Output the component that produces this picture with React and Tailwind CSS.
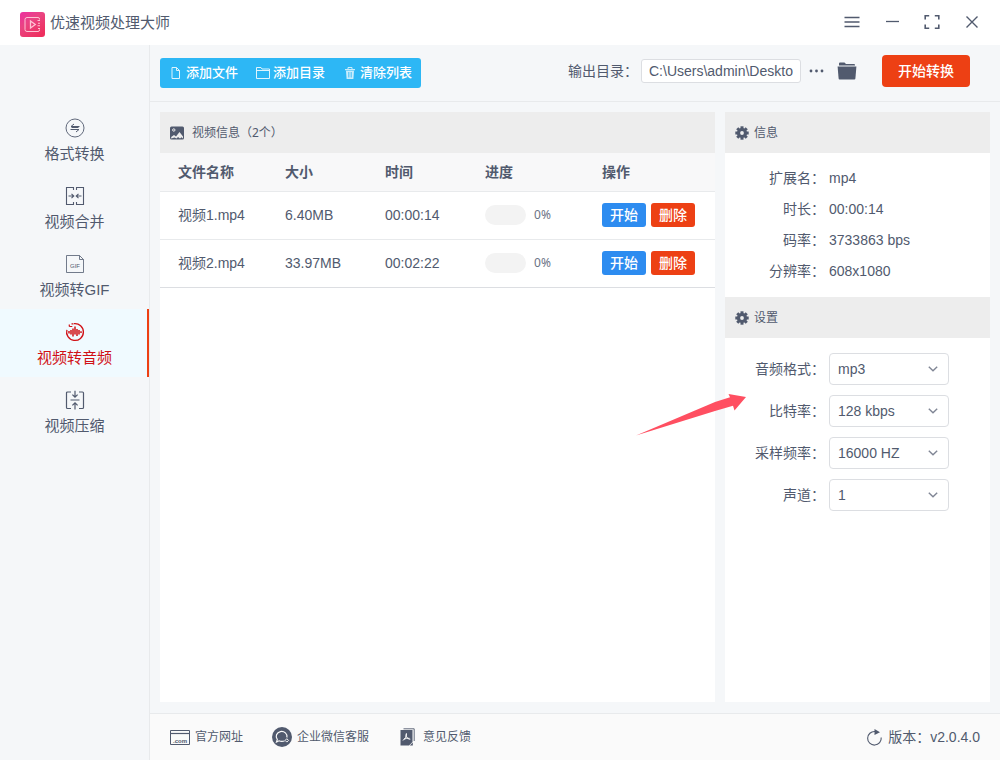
import React from "react";
import { useState } from "react";

const FormatIcon = () => (
  <svg className="w-5 h-5" viewBox="0 0 20 20" fill="none" stroke="currentColor" strokeWidth="0.9">
    <circle cx="10" cy="10" r="9" />
    <path d="M14.5 8.5H6l3-2.500M5.500 11.500h8.500l-3 2.500M6.500 9.500h7" strokeWidth="1" />
  </svg>
);

const MergeIcon = () => (
  <svg className="w-5 h-5" viewBox="0 0 20 20" fill="none" stroke="currentColor" strokeWidth="1.1">
    <path d="M8.500 4V1.500h-7v17h7V16M11.500 4V1.500h7v17h-7V16" />
    <path d="M3.500 10h5M6.500 7.800L8.800 10l-2.300 2.200M16.500 10h-5M13.500 7.800L11.200 10l2.300 2.200" />
  </svg>
);

const GifIcon = () => (
  <svg className="w-5 h-5" viewBox="0 0 20 20" fill="none" stroke="currentColor" strokeWidth="0.8">
    <path d="M14.500 1.500h-13v17h17v-13zM14.500 1.500v4h4" />
    <text x="10" y="14" textAnchor="middle" fontSize="6" fontFamily="Liberation Sans, sans-serif" fill="currentColor" stroke="none">
      GIF
    </text>
  </svg>
);

const AudioIcon = () => (
  <svg className="w-5 h-5" viewBox="0 0 20 20" fill="none" stroke="currentColor">
    <path d="M9 1.700A8.400 8.400 0 1 1 1.900 7.800" strokeWidth="1.300" />
    <path d="M4.300 4.500V2.500M4.300 4.500h3M6.500 1.800h2" strokeWidth="1.200" />
    <path d="M4 9v2.500M6 8v4.500M8 6.500v8M10 4.500v8M12 7v7M14 8v4.500M16 9.300v1.700" strokeWidth="1.500" />
  </svg>
);

const CompressIcon = () => (
  <svg className="w-5 h-5" viewBox="0 0 20 20" fill="none" stroke="currentColor" strokeWidth="1.2">
    <path d="M6 2H2.500q-1 0-1 1v14.500q0 1 1 1H6M14 2h3.500q1 0 1 1v14.500q0 1-1 1H14" />
    <path d="M5.500 10h9M10 .8V7M7.400 4.600L10 7.200l2.600-2.600M10 19.500V13M7.400 15.400L10 12.800l2.600 2.600" />
  </svg>
);

const Gear = () => (
  <svg className="w-[14px] h-[14px]" viewBox="0 0 14 14">
    <g fill="currentColor">
      <rect x="5.500" y="0.300" width="3" height="13.400" />
      <rect x="5.500" y="0.300" width="3" height="13.400" transform="rotate(45 7 7)" />
      <rect x="5.500" y="0.300" width="3" height="13.400" transform="rotate(90 7 7)" />
      <rect x="5.500" y="0.300" width="3" height="13.400" transform="rotate(135 7 7)" />
      <circle cx="7" cy="7" r="5.100" />
    </g>
    <circle cx="7" cy="7" r="1.900" fill="#ededed" />
  </svg>
);

const navItems = [
  { label: "格式转换", icon: FormatIcon },
  { label: "视频合并", icon: MergeIcon },
  { label: "视频转GIF", icon: GifIcon },
  { label: "视频转音频", icon: AudioIcon },
  { label: "视频压缩", icon: CompressIcon },
];

const files = [
  { name: "视频1.mp4", size: "6.40MB", time: "00:00:14", progress: 0 },
  { name: "视频2.mp4", size: "33.97MB", time: "00:02:22", progress: 0 },
];

const info = [
  ["扩展名：", "mp4"],
  ["时长：", "00:00:14"],
  ["码率：", "3733863 bps"],
  ["分辨率：", "608x1080"],
];

const settings = [
  { id: "format", label: "音频格式：", options: ["mp3", "wav", "aac"] },
  { id: "bitrate", label: "比特率：", options: ["128 kbps", "192 kbps", "320 kbps"] },
  { id: "sample", label: "采样频率：", options: ["16000 HZ", "44100 HZ", "48000 HZ"] },
  { id: "channel", label: "声道：", options: ["1", "2"] },
];

const TitleBar = () => (
  <header className="h-[45px] shrink-0 bg-white flex items-center justify-between pl-5 pr-2">
    <div className="flex items-center gap-[5px]">
      <svg className="w-[25px] h-[25px] mt-1" viewBox="0 0 25 25" fill="none">
        <defs>
          <linearGradient id="logo" x1="0" y1="0" x2="0.7" y2="1">
            <stop offset="0" stopColor="#ec2fa0" />
            <stop offset="0.45" stopColor="#ea4482" />
            <stop offset="1" stopColor="#ee2f5e" />
          </linearGradient>
        </defs>
        <rect width="25" height="25" rx="3" fill="url(#logo)" />
        <g stroke="#ffc3d4">
          <path d="M19.500 7.500V7q0-1.500-1.500-1.500H7Q5 5.500 5 7.500v10q0 2 2 2h11q1.500 0 1.500-1.500v-.5" />
          <path d="M10.500 9v7l4.800-3.500z" strokeWidth="1.300" />
          <path d="M17.500 8.500h2.500M18 11.200h2M17.500 13.800h2.500M18 16.500h2" strokeWidth="1.100" />
        </g>
      </svg>
      <h1 className="text-[15px] leading-5">优速视频处理大师</h1>
    </div>
    <div className="flex h-full items-center">
      <button aria-label="菜单" className="w-10 h-8 flex items-center justify-center">
        <svg className="w-4 h-4" viewBox="0 0 16 16" stroke="currentColor" strokeWidth="1.3">
          <path d="M.5 2.500h15M.5 7h15M.5 11.500h15" />
        </svg>
      </button>
      <button aria-label="最小化" className="w-10 h-8 flex items-center justify-center">
        <svg className="w-4 h-4" viewBox="0 0 16 16" stroke="currentColor" strokeWidth="1.3">
          <path d="M2 6.500h13" />
        </svg>
      </button>
      <button aria-label="最大化" className="w-10 h-8 flex items-center justify-center">
        <svg className="w-4 h-4" viewBox="0 0 16 16" fill="none" stroke="currentColor" strokeWidth="1.6">
          <path d="M1.200 4.500V.8h4M10.800.8h4v3.700M14.800 9.500v3.700h-4M5.200 13.200h-4V9.500" />
        </svg>
      </button>
      <button aria-label="关闭" className="w-10 h-8 flex items-center justify-center">
        <svg className="w-4 h-4" viewBox="0 0 16 16" stroke="currentColor" strokeWidth="1.4">
          <path d="M2.500 1.500l11 11M13.500 1.500l-11 11" />
        </svg>
      </button>
    </div>
  </header>
);

const Toolbar = () => (
  <div className="h-[57px] shrink-0 border-b border-[#e8eaec] flex items-start justify-between pl-[10px] pr-[30px]">
    <div className="mt-[13px] h-[30px] flex rounded-[3px] bg-[#2db7f5] text-white text-[13px] font-medium">
      <button className="flex items-center gap-[3px] px-[9px]">
        <svg className="w-[14px] h-[14px]" viewBox="0 0 14 14" fill="none" stroke="currentColor" opacity="0.85">
          <path d="M3 1.500h4.500l3 3v8H3zM7.500 1.500v3h3" />
        </svg>
        添加文件
      </button>
      <button className="flex items-center gap-[3px] px-[9px]">
        <svg className="w-[14px] h-[14px]" viewBox="0 0 14 14" fill="none" stroke="currentColor" opacity="0.85">
          <path d="M.5 12.500v-11h4.500l1 1.500h7.500v9.500zM.5 4.500h13" />
        </svg>
        添加目录
      </button>
      <button className="flex items-center gap-[3px] px-[9px]">
        <svg className="w-[14px] h-[14px]" viewBox="0 0 14 14" opacity="0.75">
          <path d="M2 3h10v1.200H2zM3 4.800h8l-.6 8.200H3.600z" fill="currentColor" />
          <path d="M5 3V1.500h4V3" fill="none" stroke="currentColor" />
          <path d="M5.500 6v5.500M7 6v5.500M8.500 6v5.500" stroke="#2db7f5" strokeWidth="0.6" />
        </svg>
        清除列表
      </button>
    </div>
    <div className="mt-[10px] flex items-center">
      <label htmlFor="output">输出目录：</label>
      <input
        id="output"
        type="text"
        defaultValue="C:\Users\admin\Deskto"
        className="ml-[3px] w-40 h-6 px-[7px] bg-white border border-[#dcdee2] rounded-[3px] outline-none"
      />
      <button aria-label="选择目录" className="ml-2">
        <svg className="w-[15px] h-4" viewBox="0 0 15 16" fill="currentColor">
          <circle cx="2" cy="8" r="1.400" />
          <circle cx="7.500" cy="8" r="1.400" />
          <circle cx="13" cy="8" r="1.400" />
        </svg>
      </button>
      <button aria-label="打开目录" className="ml-[13px]">
        <svg className="w-5 h-5" viewBox="0 0 20 20" fill="currentColor">
          <path d="M2 2.500q0-1 1-1h4.500l1.500 1.500h8q1 0 1 1v.6H2z" />
          <path d="M.6 5.500h18.800l-1 12q-.1.900-1 .9H2.600q-.9 0-1-.9z" />
        </svg>
      </button>
      <button className="ml-[25px] w-[88px] h-8 rounded-[4px] bg-[#ed4014] text-white font-medium">
        开始转换
      </button>
    </div>
  </div>
);

const FileTable = () => (
  <table className="w-full table-fixed text-left">
    <colgroup>
      <col className="w-[107px]" />
      <col className="w-[100px]" />
      <col className="w-[100px]" />
      <col className="w-[117px]" />
      <col />
    </colgroup>
    <thead>
      <tr className="h-[38px] bg-[#f8f8f9] border-b border-[#e8eaec]">
        {["文件名称", "大小", "时间", "进度", "操作"].map((title) => (
          <th key={title} className="pl-[18px] font-bold">
            {title}
          </th>
        ))}
      </tr>
    </thead>
    <tbody>
      {files.map((file) => (
        <tr key={file.name} className="h-12 border-b border-[#e8eaec] last:border-[#dcdee2]">
          <td className="pl-[18px]">{file.name}</td>
          <td className="pl-[18px]">{file.size}</td>
          <td className="pl-[18px]">{file.time}</td>
          <td className="pl-[18px]">
            <div className="flex items-center gap-2">
              <div className="w-[41px] h-5 rounded-full bg-[#f3f3f3] overflow-hidden">
                <div className="h-full bg-[#2db7f5]" style={{ width: `${file.progress}%` }} />
              </div>
              <span className="text-xs text-[#6b7385] font-['Noto_Sans',sans-serif]">{file.progress}%</span>
            </div>
          </td>
          <td className="pl-[18px]">
            <div className="flex gap-[5px] text-white font-medium">
              <button className="w-11 h-6 rounded-[3px] bg-[#2d8cf0]">开始</button>
              <button className="w-11 h-6 rounded-[3px] bg-[#ed4014]">删除</button>
            </div>
          </td>
        </tr>
      ))}
    </tbody>
  </table>
);

const SidePanel = () => (
  <aside className="w-[265px] shrink-0 bg-white">
    <h2 className="h-[41px] bg-[#ededed] flex items-center gap-[5px] px-[10px] text-xs">
      <Gear />
      信息
    </h2>
    <dl className="h-36 pt-[9px]">
      {info.map(([label, value]) => (
        <div key={label} className="flex h-[31px] items-center gap-1">
          <dt className="w-[100px] text-right">{label}</dt>
          <dd>{value}</dd>
        </div>
      ))}
    </dl>
    <h2 className="h-[41px] bg-[#ededed] flex items-center gap-[5px] px-[10px] text-xs">
      <Gear />
      设置
    </h2>
    <form className="relative pt-[15px] flex flex-col gap-[10px]">
      {settings.map(({ id, label, options }) => (
        <div key={id} className="flex items-center gap-1">
          <label htmlFor={id} className="w-[100px] text-right">
            {label}
          </label>
          <div className="relative w-[120px]">
            <select
              id={id}
              className="w-full h-8 pl-2 pr-6 appearance-none bg-white border border-[#dcdee2] rounded-[4px] outline-none"
            >
              {options.map((option) => (
                <option key={option}>{option}</option>
              ))}
            </select>
            <svg
              className="absolute right-[11px] top-[11px] w-[10px] h-[10px] pointer-events-none"
              viewBox="0 0 10 10"
              fill="none"
              stroke="#808695"
              strokeWidth="1.400"
            >
              <path d="M.8 2.800L5 6.800l4.200-4" />
            </svg>
          </div>
        </div>
      ))}
      <svg className="absolute -left-[90px] top-[54px] w-[112px] h-[44px] pointer-events-none" viewBox="0 0 112 44">
        <path d="M1 43.500L80 10L95 5.300L93.500 2L111 5L99.500 18.500L98 13.700L80 19z" fill="#ff4f61" />
      </svg>
    </form>
  </aside>
);

const Footer = () => (
  <footer className="h-[47px] shrink-0 border-t border-[#e8eaec] bg-[#fafafa] flex items-center justify-between px-5">
    <div className="flex items-center gap-[29px] text-xs">
      <a href="#site" className="flex items-center gap-[5px]">
        <svg className="w-5 h-5" viewBox="0 0 20 20" fill="none" stroke="currentColor">
          <path d="M.5 3.500h19v14H.5z" />
          <path d="M.5 6.500h19" strokeWidth="1.200" />
          <text x="10" y="15.500" textAnchor="middle" fontSize="6" fontWeight="bold" fontFamily="Liberation Sans, sans-serif" fill="currentColor" stroke="none">
            .com
          </text>
        </svg>
        官方网址
      </a>
      <a href="#service" className="flex items-center gap-[5px]">
        <svg className="w-5 h-5" viewBox="0 0 20 20" fill="none">
          <circle cx="10" cy="10" r="10" fill="currentColor" />
          <path d="M12.500 14Q9.500 15 7 13.800L4.500 15l.8-2.500A5.400 5 0 1 1 14.900 10.500" stroke="#fafafa" strokeWidth="1.200" />
          <path d="M14.800 11.700l1.700 1.700-1.700 1.700-1.700-1.700z" stroke="#fafafa" strokeWidth="1" />
        </svg>
        企业微信客服
      </a>
      <a href="#feedback" className="flex items-center gap-[5px]">
        <svg className="w-5 h-5" viewBox="0 0 20 20" fill="none">
          <path d="M5.500 1.800h10.700V14" stroke="currentColor" strokeWidth="0.900" />
          <path d="M2.500 3h12v12l-3.500 3.500H2.500z" fill="currentColor" />
          <path d="M14.800 15.500v3h-3z" fill="currentColor" />
          <path d="M8.300 6.500q-.8 3 1 4.500t3 1.200M8.500 6.500q.3 4-3.500 7M6 12.200q2.500-1.300 5.500-.9" stroke="#fafafa" />
        </svg>
        意见反馈
      </a>
    </div>
    <div className="flex items-center gap-[5px]">
      <svg className="w-[17px] h-[17px]" viewBox="0 0 17 17" fill="none">
        <path d="M9 2.500A6.800 6.800 0 1 0 15.200 8.500" stroke="currentColor" strokeWidth="1.100" />
        <path d="M8.500 0v6l5.500-2.800z" fill="currentColor" />
      </svg>
      <span>版本：v2.0.4.0</span>
    </div>
  </footer>
);

const App = () => {
  const [active, setActive] = useState("视频转音频");

  return (
    <div className="min-h-screen flex flex-col bg-[#f5f7f9] text-[#515a6e] text-sm font-['Liberation_Sans','Noto_Sans_CJK_SC',sans-serif]">
      <TitleBar />
      <div className="flex-1 flex">
        <nav className="w-[150px] shrink-0 pt-[60px] border-r border-[#e8eaec]">
          {navItems.map(({ label, icon: Icon }) => (
            <button
              key={label}
              onClick={() => setActive(label)}
              className={
                active === label
                  ? "w-full h-[68px] pt-[13px] flex flex-col items-center gap-[6px] text-[15px] leading-5 bg-[#f0faff] text-[#d01016] shadow-[inset_-2px_0_0_#ed4014]"
                  : "w-full h-[68px] pt-[13px] flex flex-col items-center gap-[6px] text-[15px] leading-5"
              }
            >
              <Icon />
              {label}
            </button>
          ))}
        </nav>
        <div className="flex-1 min-w-0 flex flex-col">
          <Toolbar />
          <main className="flex-1 flex gap-[10px] px-[10px] pt-[10px] pb-[11px]">
            <section className="flex-1 min-w-0 bg-white">
              <h2 className="h-[41px] bg-[#ededed] flex items-center gap-2 px-[10px] text-xs">
                <svg className="w-[14px] h-[14px]" viewBox="0 0 14 14">
                  <rect y="0.500" width="14" height="13" rx="1.500" fill="currentColor" />
                  <circle cx="3.800" cy="4" r="1.200" fill="none" stroke="#ededed" />
                  <path d="M1.200 12.500V11L4 9l2 1.500L9.500 6l3.500 4.500v2l-1.500-1.200-1.500 1.200-2-1.500-1.500 1.500-2-1z" fill="#ededed" />
                </svg>
                <span className="font-['Noto_Sans','Noto_Sans_CJK_SC',sans-serif]">视频信息（2个）</span>
              </h2>
              <FileTable />
            </section>
            <SidePanel />
          </main>
          <Footer />
        </div>
      </div>
    </div>
  );
};

export default App;
